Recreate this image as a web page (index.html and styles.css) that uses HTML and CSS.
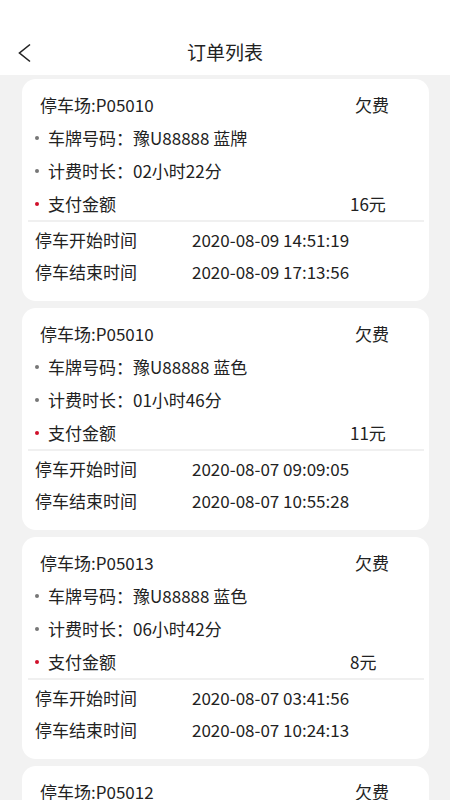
FILE: index.html
```html
<!DOCTYPE html>
<html>
<head>
    <meta charset="UTF-8">
    <title>订单列表</title>
    <link rel="stylesheet" href="styles.css">
</head>
<body>
    <div class="header">
        <span class="back">
            <svg width="14" height="20" viewBox="0 0 14 20"><path d="M13 1.5 L2.5 10 L13 18.5" fill="none" stroke="#222" stroke-width="1.6"/></svg>
        </span>
        <span class="titulo">订单列表</span>
    </div>

    <div class="lista">
        <div class="card">
            <div class="linha topo"><span class="parque">停车场:P05010</span><span class="estado">欠费</span></div>
            <div class="linha item"><i class="ponto"></i>车牌号码：豫U88888 蓝牌</div>
            <div class="linha item"><i class="ponto"></i>计费时长：02小时22分</div>
            <div class="linha item"><i class="ponto vermelho"></i><span class="rotulo">支付金额</span><span class="valor">16元</span></div>
            <div class="divisor"></div>
            <div class="linha hora"><span class="nome">停车开始时间</span>2020-08-09 14:51:19</div>
            <div class="linha hora"><span class="nome">停车结束时间</span>2020-08-09 17:13:56</div>
        </div>

        <div class="card">
            <div class="linha topo"><span class="parque">停车场:P05010</span><span class="estado">欠费</span></div>
            <div class="linha item"><i class="ponto"></i>车牌号码：豫U88888 蓝色</div>
            <div class="linha item"><i class="ponto"></i>计费时长：01小时46分</div>
            <div class="linha item"><i class="ponto vermelho"></i><span class="rotulo">支付金额</span><span class="valor">11元</span></div>
            <div class="divisor"></div>
            <div class="linha hora"><span class="nome">停车开始时间</span>2020-08-07 09:09:05</div>
            <div class="linha hora"><span class="nome">停车结束时间</span>2020-08-07 10:55:28</div>
        </div>

        <div class="card">
            <div class="linha topo"><span class="parque">停车场:P05013</span><span class="estado">欠费</span></div>
            <div class="linha item"><i class="ponto"></i>车牌号码：豫U88888 蓝色</div>
            <div class="linha item"><i class="ponto"></i>计费时长：06小时42分</div>
            <div class="linha item"><i class="ponto vermelho"></i><span class="rotulo">支付金额</span><span class="valor">8元</span></div>
            <div class="divisor"></div>
            <div class="linha hora"><span class="nome">停车开始时间</span>2020-08-07 03:41:56</div>
            <div class="linha hora"><span class="nome">停车结束时间</span>2020-08-07 10:24:13</div>
        </div>

        <div class="card">
            <div class="linha topo"><span class="parque">停车场:P05012</span><span class="estado">欠费</span></div>
        </div>
    </div>
</body>
</html>
```

FILE: styles.css
```css
body {
    margin: 0;
    font-family: "Noto Sans CJK SC", "Noto Sans", sans-serif;
    background-color: #f2f2f2;
    color: #222;
    height: 800px;
    overflow: hidden;
}

.header {
    background-color: #fff;
    height: 75px;
    display: flex;
    align-items: center;
    justify-content: center;
    padding-top: 28px;
    box-sizing: border-box;
    position: relative;
}

.back {
    position: absolute;
    left: 17px;
    top: 43px;
    display: flex;
}

.titulo {
    font-size: 19px;
}

.lista {
    padding: 4px 21px 0 22px;
    display: flex;
    flex-direction: column;
    gap: 7px;
}

.card {
    background-color: #fff;
    border-radius: 14px;
    padding: 9px 5px 14px 6px;
    font-size: 17px;
}

.linha {
    height: 33px;
    display: flex;
    align-items: center;
}

.topo {
    padding: 0 35px 0 12px;
    justify-content: space-between;
}

.item {
    padding-left: 7px;
}

.ponto {
    width: 4px;
    height: 4px;
    border-radius: 50%;
    background-color: #777;
    margin-right: 9px;
}

.ponto.vermelho {
    background-color: #d0102a;
}

.rotulo {
    width: 302px;
}

.divisor {
    height: 2px;
    background-color: #f0f0f0;
    margin-bottom: 1px;
}

.hora {
    height: 32px;
    padding-left: 7px;
}

.nome {
    width: 157px;
}
```
